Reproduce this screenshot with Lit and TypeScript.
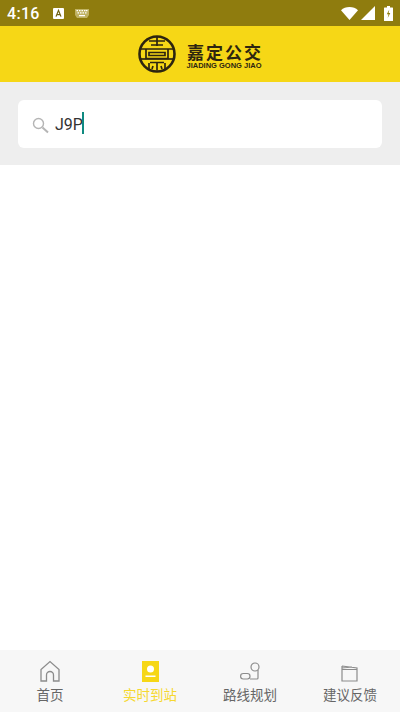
import { LitElement, html, css } from "lit";
import { customElement } from "lit/decorators.js";

@customElement("app-root")
export class AppRoot extends LitElement {
  static styles = css`
    :host { display: flex; flex-direction: column; width: 400px; height: 712px; background: #fff; overflow: hidden;
      font-family: Roboto, "Noto Sans CJK SC", sans-serif; }
    .status { height: 26px; flex: none; background: #8f7c0e; display: flex; align-items: center; padding: 0 7px; color: #fff; }
    .time { font-size: 16px; font-weight: 500; letter-spacing: 0.3px; width: 46px; }
    .a-ic { display: block; margin-right: 11px; }
    .spacer { flex: 1; }
    .right { display: flex; align-items: center; gap: 3px; }
    .batt { margin-left: 6px; }
    .header { height: 56px; flex: none; background: #f6d716; display: flex; align-items: center; justify-content: center; gap: 10px; }
    .brand { display: flex; flex-direction: column; align-items: center; color: #2d2510; width: 77px; margin-top: 4px; }
    .cn { font-family: "Noto Sans CJK SC", sans-serif; font-size: 17px; line-height: 18px; font-weight: 700; letter-spacing: 2px; margin-right: -2px; white-space: nowrap; }
    .en { font-family: "Liberation Sans", sans-serif; font-size: 7.500px; line-height: 9px; font-weight: 700; white-space: nowrap; }
    .search { height: 83px; flex: none; background: #eeeeee; padding: 18px 18px 17px; box-sizing: border-box; }
    .box { height: 48px; background: #fff; border-radius: 6px; display: flex; align-items: center; padding-left: 14px; }
    .box svg { margin-right: 6px; margin-top: 3px; }
    .val { font-size: 16px; color: #333; }
    .caret { width: 2px; height: 22px; background: #0f8a80; margin-bottom: 2px; margin-left: -1px; }
    .main { flex: 1; background: #fff; }
    .tabs { height: 62px; flex: none; background: #f7f7f7; display: grid; grid-template-columns: repeat(4, 1fr); }
    .tab { display: flex; flex-direction: column; align-items: center; padding-top: 10px; box-sizing: border-box; color: #666; font-size: 13.500px; }
    .tab svg { display: block; height: 23px; }
    .tab span { line-height: 20px; margin-top: 1px; font-family: "Noto Sans CJK SC", sans-serif; }
    .tab.on { color: #f6d82f; }
  `;

  render() {
    return html`
      <div class="status">
        <span class="time">4:16</span>
        <svg class="a-ic" width="11" height="11" viewBox="0 0 11 11"><rect width="11" height="11" rx="1" fill="#fff"/><path d="M3 8.600 5.500 2.400 8 8.600M3.900 6.600h3.200" fill="none" stroke="#6f6010" stroke-width="1.200"/></svg>
        <svg width="14" height="9" viewBox="0 0 14 9" fill="#e8dfa8"><path d="M0 0h14v6l-2 3H2L0 6z" opacity=".55"/><path d="M1.500 1h1.500v1.200H1.500zM4 1h1.500v1.200H4zM6.500 1H8v1.200H6.500zM9 1h1.500v1.200H9zM11 1h1.500v1.200H11zM2.500 3.200H4v1.200H2.500zM5 3.200h1.500v1.200H5zM7.500 3.200H9v1.200H7.500zM10 3.200h1.500v1.200H10zM4 6h6v1.200H4z" fill="#fff"/></svg>
        <span class="spacer"></span>
        <div class="right">
          <svg width="17" height="13" viewBox="0 0 17 13"><path d="M0 3.200C2.200 1.200 5.200 0 8.500 0S14.800 1.200 17 3.200L8.500 13z" fill="#fff"/></svg>
          <svg width="14" height="14" viewBox="0 0 14 14"><path d="M14 0v14H0z" fill="#fff"/></svg>
          <svg width="9" height="15" viewBox="0 0 9 15" class="batt"><path d="M3 0h3v1.500h2.500a.5.5 0 0 1 .5.500v12.500a.5.5 0 0 1-.5.500H.5a.5.5 0 0 1-.5-.500V2a.5.5 0 0 1 .5-.500H3z" fill="#fff"/><path d="M5.300 3.500 2.800 8.300h1.700L3.700 12l2.600-5H4.600z" fill="#8f7c0e"/></svg>
        </div>
      </div>
      <div class="header">
        <svg width="38" height="38" viewBox="0 0 38 38" fill="none" stroke="#2d2510">
          <circle cx="19" cy="19" r="17.500" stroke-width="2.600"/>
          <g stroke-width="1.700">
            <path d="M19 2v9M11 6h16M13 10h12"/>
            <path d="M3 14h32M8 14v9.500h22V14M11 17.500h16v3H11z"/>
            <path d="M3 24h32"/>
            <path d="M12 27.500h14M19 27.500v8M11 28v7M27 28v7M15 31l-1 3M23 31l1 3"/>
          </g>
        </svg>
        <div class="brand">
          <div class="cn">嘉定公交</div>
          <div class="en">JIADING GONG JIAO</div>
        </div>
      </div>
      <div class="search">
        <div class="box">
          <svg width="17" height="17" viewBox="0 0 17 17" fill="none" stroke="#b5b5b5"><circle cx="6.500" cy="6.500" r="5" stroke-width="1.400"/><path d="m10.500 10.500 5.500 5" stroke-width="2"/></svg>
          <span class="val">J9P</span><span class="caret"></span>
        </div>
      </div>
      <div class="main"></div>
      <div class="tabs">
        <div class="tab">
          <svg width="20" height="23" viewBox="0 0 20 23" fill="none" stroke="#8c8c8c" stroke-width="1.300"><path d="M1 21V9.500L10 1.500l9 8V21h-5.500v-6a3.500 3.500 0 0 0-7 0v6z"/></svg>
          <span>首页</span>
        </div>
        <div class="tab on">
          <svg width="17" height="23" viewBox="0 0 17 23"><rect y="1" width="17" height="21" fill="#f6d716"/><circle cx="8.500" cy="9" r="3.500" fill="#fff"/><rect x="3.500" y="15.500" width="10" height="1.500" fill="#fff"/></svg>
          <span>实时到站</span>
        </div>
        <div class="tab">
          <svg width="20" height="23" viewBox="0 0 20 23" fill="none" stroke="#8c8c8c" stroke-width="1.200"><circle cx="15" cy="7" r="4"/><path d="M18 10v8a1 1 0 0 1-1 1H10"/><rect x="0.600" y="13.500" width="9.400" height="5.500" rx="2.700"/></svg>
          <span>路线规划</span>
        </div>
        <div class="tab">
          <svg width="18" height="23" viewBox="0 0 18 23" fill="none" stroke="#8c8c8c" stroke-width="1.200"><path d="M1 6v15h15V9.500H1M1 6l15 2v1.500M1 8l10-1"/></svg>
          <span>建议反馈</span>
        </div>
      </div>
    `;
  }
}
